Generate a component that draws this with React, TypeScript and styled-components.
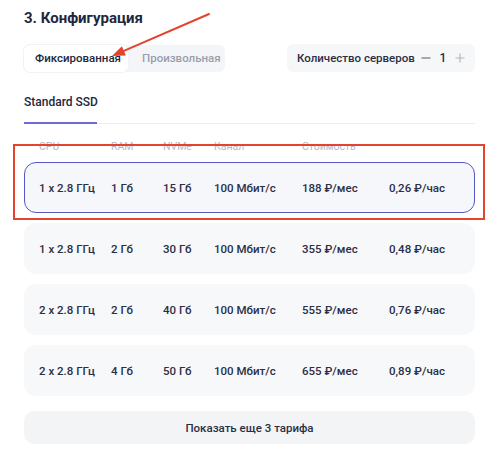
import styled, { createGlobalStyle } from 'styled-components';

const GlobalStyle = createGlobalStyle`
  html, body {
    margin: 0;
    padding: 0;
    background: #ffffff;
  }
  body {
    font-family: Roboto, "Noto Sans", sans-serif;
    color: #23273d;
  }
`;

interface Tariff {
  cpu: string;
  ram: string;
  disk: string;
  channel: string;
  month: string;
  hour: string;
}

const tariffs: Array<Tariff> = [
  { cpu: '1 x 2.8 ГГц', ram: '1 Гб', disk: '15 Гб', channel: '100 Мбит/с', month: '188 ₽/мес', hour: '0,26 ₽/час' },
  { cpu: '1 x 2.8 ГГц', ram: '2 Гб', disk: '30 Гб', channel: '100 Мбит/с', month: '355 ₽/мес', hour: '0,48 ₽/час' },
  { cpu: '2 x 2.8 ГГц', ram: '2 Гб', disk: '40 Гб', channel: '100 Мбит/с', month: '555 ₽/мес', hour: '0,76 ₽/час' },
  { cpu: '2 x 2.8 ГГц', ram: '4 Гб', disk: '50 Гб', channel: '100 Мбит/с', month: '655 ₽/мес', hour: '0,89 ₽/час' },
];

export default function App() {
  return (
    <>
      <GlobalStyle />
      <Page>
        <Title>3. Конфигурация</Title>
        <Controls>
          <Segmented>
            <Segment $active>Фиксированная</Segment>
            <Segment>Произвольная</Segment>
          </Segmented>
          <Counter>
            <CounterLabel>Количество серверов</CounterLabel>
            <CounterBtn aria-label="minus">
              <svg width="10" height="10" viewBox="0 0 10 10">
                <path d="M0.5 5h9" stroke="#6f7385" strokeWidth="1.2" />
              </svg>
            </CounterBtn>
            <CounterValue>1</CounterValue>
            <CounterBtn aria-label="plus">
              <svg width="10" height="10" viewBox="0 0 10 10">
                <path d="M0.5 5h9M5 0.5v9" stroke="#b3b6c4" strokeWidth="1.2" />
              </svg>
            </CounterBtn>
          </Counter>
        </Controls>
        <Tabs>
          <Tab $active>Standard SSD</Tab>
        </Tabs>
        <HeaderRow>
          <HeadCell>CPU</HeadCell>
          <HeadCell>RAM</HeadCell>
          <HeadCell>NVMe</HeadCell>
          <HeadCell>Канал</HeadCell>
          <HeadCell>Стоимость</HeadCell>
          <HeadCell />
        </HeaderRow>
        <List>
          {tariffs.map((t, i) => (
            <Row key={i} $selected={i === 0}>
              <Cell>{t.cpu}</Cell>
              <Cell>{t.ram}</Cell>
              <Cell>{t.disk}</Cell>
              <Cell>{t.channel}</Cell>
              <Cell>{t.month}</Cell>
              <Cell>{t.hour}</Cell>
            </Row>
          ))}
        </List>
        <MoreButton>Показать еще 3 тарифа</MoreButton>

        <Highlight />
        <Arrow width="104" height="50" viewBox="0 0 104 50">
          <path d="M101 4 L15.9 40.8" stroke="#e5432f" strokeWidth="2" strokeLinecap="round" />
          <path d="M4 46 L17.9 45.4 L13.9 36.2 Z" fill="#e5432f" />
        </Arrow>
      </Page>
    </>
  );
}

const Page = styled.div`
  position: relative;
  width: 451px;
  padding: 9px 25px 0 24px;
`;

const Title = styled.h2`
  margin: 0;
  font-size: 15px;
  line-height: 18px;
  font-weight: 700;
  color: #23273d;
`;

const Controls = styled.div`
  display: flex;
  justify-content: space-between;
  align-items: center;
  margin-top: 17px;
`;

const Segmented = styled.div`
  display: flex;
  height: 27px;
  width: 201px;
  background: #f4f5f8;
  border-radius: 6px;
`;

const Segment = styled.div<{ $active?: boolean }>`
  display: flex;
  align-items: center;
  padding: ${(p) => (p.$active ? '0 7px 0 11px' : '0 0 0 14px')};
  font-size: 11.5px;
  font-weight: 500;
  color: ${(p) => (p.$active ? '#23273d' : '#9a9eae')};
  background: ${(p) => (p.$active ? '#ffffff' : 'transparent')};
  border-radius: 6px;
  box-shadow: ${(p) => (p.$active ? '0 0 0 1px #f1f2f5' : 'none')};
  white-space: nowrap;
`;

const Counter = styled.div`
  display: flex;
  align-items: center;
  height: 28px;
  width: 188px;
  box-sizing: border-box;
  padding: 0 8px 0 10px;
  background: #f6f7f9;
  border-radius: 6px;
`;

const CounterLabel = styled.span`
  font-size: 11.5px;
  font-weight: 500;
  color: #2b2f45;
  margin-right: 4px;
  white-space: nowrap;
`;

const CounterBtn = styled.span`
  display: flex;
  align-items: center;
  justify-content: center;
  width: 16px;
`;

const CounterValue = styled.span`
  width: 22px;
  text-align: center;
  font-size: 12px;
  font-weight: 500;
  color: #2b2f45;
`;

const Tabs = styled.div`
  display: flex;
  margin-top: 20px;
  border-bottom: 1px solid #eceef3;
`;

const Tab = styled.div<{ $active?: boolean }>`
  width: 73px;
  padding: 3px 0 13px;
  font-size: 12px;
  font-weight: 500;
  color: #23273d;
  white-space: nowrap;
  border-bottom: 2px solid ${(p) => (p.$active ? '#6c6bd4' : 'transparent')};
  margin-bottom: -1px;
`;

const columns = '72px 52px 51px 88px 87px 1fr';

const HeaderRow = styled.div`
  display: grid;
  grid-template-columns: ${columns};
  padding-left: 15px;
  margin-top: 17px;
  height: 12px;
  align-items: center;
`;

const HeadCell = styled.span`
  font-size: 10.5px;
  line-height: 12px;
  color: #b4b8c7;
  white-space: nowrap;
`;

const List = styled.div`
  display: flex;
  flex-direction: column;
  gap: 10px;
  margin-top: 9px;
`;

const Row = styled.div<{ $selected?: boolean }>`
  display: grid;
  grid-template-columns: ${columns};
  align-items: center;
  height: 51px;
  box-sizing: border-box;
  padding-left: ${(p) => (p.$selected ? '14px' : '15px')};
  background: ${(p) => (p.$selected ? '#f6f7fb' : '#f7f8fa')};
  border: ${(p) => (p.$selected ? '1.5px solid #5557c4' : 'none')};
  border-radius: 12px;
`;

const Cell = styled.span`
  font-size: 11.5px;
  font-weight: 500;
  color: #2b2f45;
  white-space: nowrap;
`;

const MoreButton = styled.div`
  display: flex;
  align-items: center;
  justify-content: center;
  height: 33px;
  margin-top: 15px;
  background: #f3f4f6;
  border-radius: 10px;
  font-size: 11.5px;
  font-weight: 500;
  color: #2b2f45;
`;

const Highlight = styled.div`
  position: absolute;
  left: 13px;
  top: 144px;
  width: 472px;
  height: 76px;
  box-sizing: border-box;
  border: 2px solid #e5432f;
  pointer-events: none;
`;

const Arrow = styled.svg`
  position: absolute;
  left: 108px;
  top: 10px;
  pointer-events: none;
`;
